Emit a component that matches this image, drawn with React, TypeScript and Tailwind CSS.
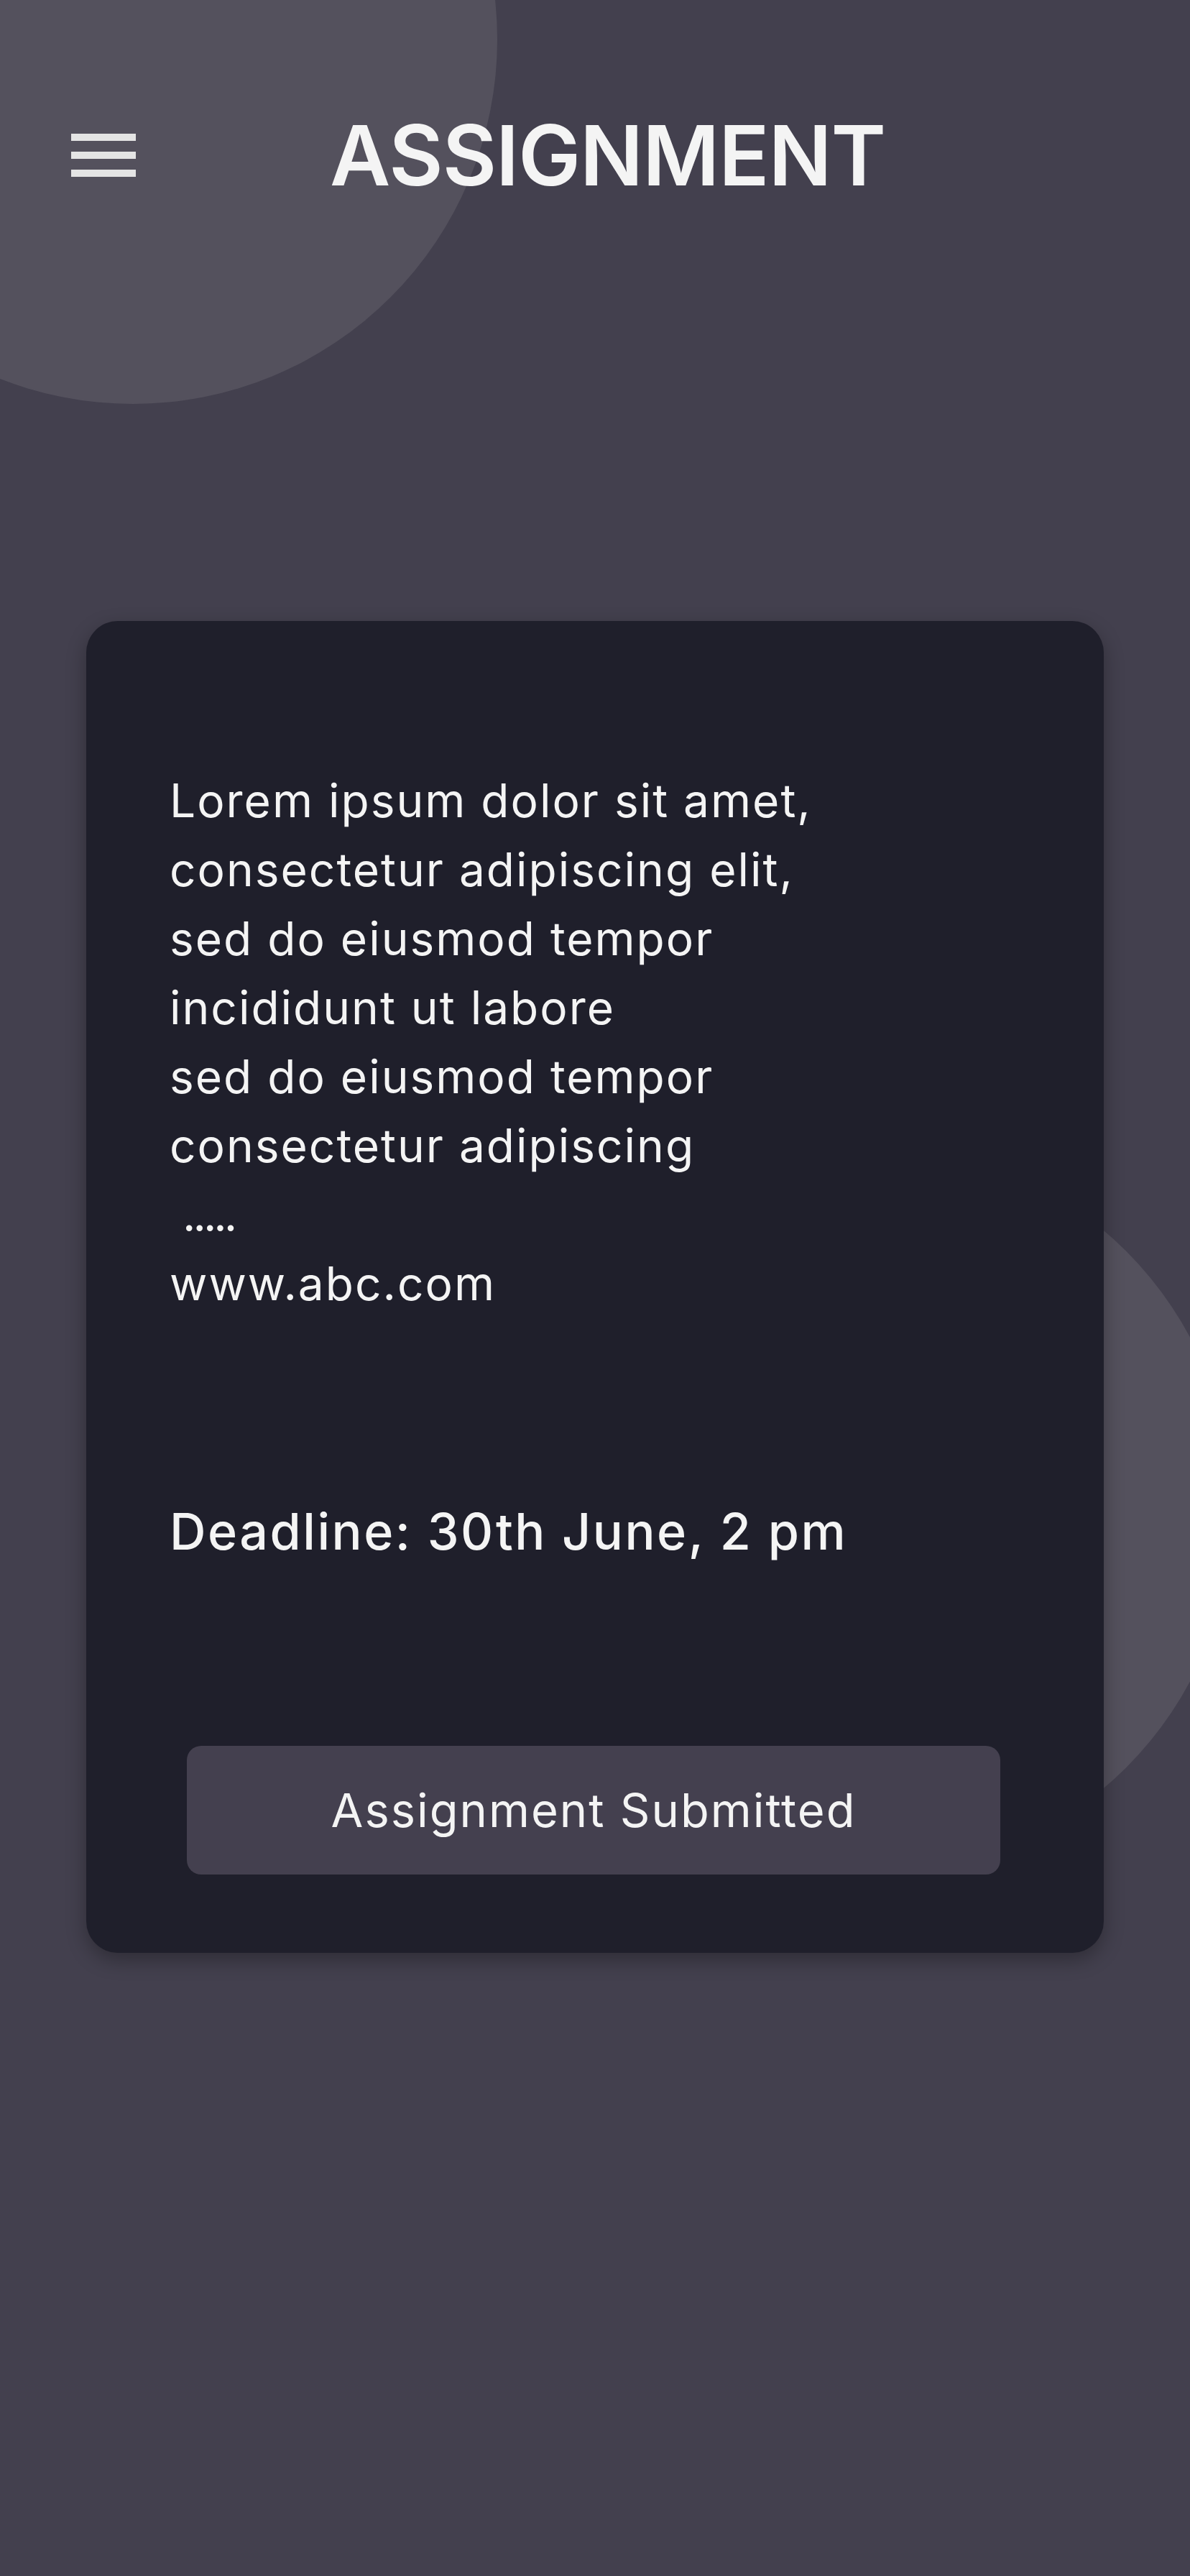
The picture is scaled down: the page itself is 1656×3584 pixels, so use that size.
import React from "react";

const lines = [
  "Lorem ipsum dolor sit amet,",
  "consectetur adipiscing elit,",
  "sed do eiusmod tempor",
  "incididunt ut labore",
  "sed do eiusmod tempor",
  "consectetur adipiscing",
];

function MenuButton() {
  return (
    <button className="flex flex-col gap-[15px]" aria-label="Open menu">
      <span className="block h-[10px] w-[90px] bg-[#e4e4e4]" />
      <span className="block h-[10px] w-[90px] bg-[#e4e4e4]" />
      <span className="block h-[10px] w-[90px] bg-[#e4e4e4]" />
    </button>
  );
}

export default function App() {
  return (
    <div className="relative min-h-screen w-full overflow-hidden bg-[#43404e] font-['Inter',sans-serif] text-[#f4f4f4]">
      {/* background blobs */}
      <div className="absolute left-[-322px] top-[-452px] h-[1014px] w-[1014px] rounded-full bg-[#54515d]" />
      <div className="absolute left-[700px] top-[1592px] h-[1016px] w-[1016px] rounded-full bg-[#54515d]" />

      <header className="relative flex h-[432px] items-center pl-[99px]">
        <MenuButton />
        <h1 className="ml-[270px] text-[116px] font-semibold leading-none tracking-[-1px]">
          ASSIGNMENT
        </h1>
      </header>

      <main className="relative mt-[432px] px-[120px]">
        <div className="rounded-[44px] bg-[#1f1f2b] pb-[109px] pl-[116px] pr-[80px] pt-[202px] shadow-[0_10px_28px_rgba(0,0,0,0.3)]">
          <p className="text-[64px] leading-[96px] tracking-[2px]">
            {lines.map((line, i) => (
              <span key={i} className="block">
                {line}
              </span>
            ))}
            <span className="block pl-[18px] tracking-[-4px]">.....</span>
            <span className="block">www.abc.com</span>
          </p>

          <p className="mt-[243px] text-[70px] font-medium leading-[108px] tracking-[2.5px]">
            Deadline: 30th June, 2 pm
          </p>

          <div className="mt-[244px] pl-[24px] pr-[64px]">
            <button className="flex h-[179px] w-full items-center justify-center rounded-[20px] bg-[#44404f] text-[65px] tracking-[2px]">
              Assignment Submitted
            </button>
          </div>
        </div>
      </main>
    </div>
  );
}
